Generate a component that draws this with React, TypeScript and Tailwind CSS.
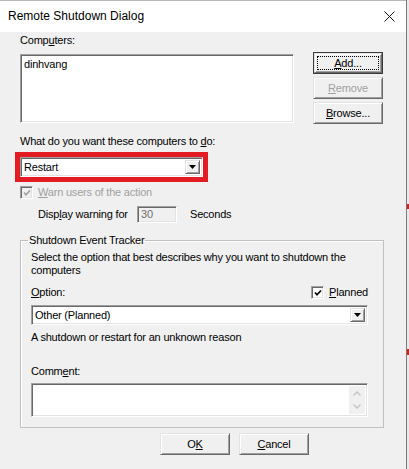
import type { ReactNode } from 'react'

const sunken =
  'border border-[#a0a0a0] border-r-white border-b-white shadow-[inset_1px_1px_0_#696969,inset_-1px_-1px_0_#e3e3e3]'
const raised =
  'border border-[#e3e3e3] border-r-[#696969] border-b-[#696969] bg-[#f0f0f0] shadow-[inset_1px_1px_0_#fff,inset_-1px_-1px_0_#a0a0a0]'

function U({ children }: { children: ReactNode }) {
  return <span className="underline decoration-1 underline-offset-[1px]">{children}</span>
}

function Btn({ children, disabled }: { children: ReactNode; disabled?: boolean }) {
  return (
    <div className={`flex h-[22px] w-[70px] items-center justify-center ${raised} ${disabled ? 'text-[#a0a0a0]' : 'text-black'}`}>
      {children}
    </div>
  )
}

function DefaultBtn({ children }: { children: ReactNode }) {
  return (
    <div className="h-[22px] w-[70px] border border-[#3c3c3c]">
      <div className={`flex h-full w-full p-[2px] ${raised}`}>
        <div className="flex flex-1 items-center justify-center border border-dotted border-black">{children}</div>
      </div>
    </div>
  )
}

function Combo({ value, width }: { value: string; width: string }) {
  return (
    <div className={`flex h-[20px] ${width} items-stretch bg-white p-[2px] ${sunken}`}>
      <span className="flex flex-1 items-center pl-[1px]">{value}</span>
      <div className={`flex w-[15px] items-center justify-center ${raised}`}>
        <svg width="7" height="4" viewBox="0 0 7 4">
          <path d="M0 0h7L3.5 4z" fill="#000" />
        </svg>
      </div>
    </div>
  )
}

function Check({ disabled }: { disabled?: boolean }) {
  return (
    <div className={`flex h-[13px] w-[13px] shrink-0 items-center justify-center ${sunken} ${disabled ? 'bg-[#f0f0f0]' : 'bg-white'}`}>
      <svg width="8" height="8" viewBox="0 0 8 8">
        <path d="M1 3.5 L3 5.8 L7 1.5" fill="none" stroke={disabled ? '#a0a0a0' : '#000'} strokeWidth="1.7" />
      </svg>
    </div>
  )
}

export default function App() {
  return (
    <div className="flex h-[469px] w-[409px] bg-[#f0f0f0] font-['Liberation_Sans',Arial,sans-serif] text-[11px] leading-[13px] tracking-[-0.2px] text-black">
      <div className="flex w-[406px] flex-col border-t border-[#b9b9b9]">
        <div className="flex h-[31px] items-center justify-between bg-white pl-[8px] pr-[11px]">
          <span className="text-[12px] tracking-normal">Remote Shutdown Dialog</span>
          <svg width="11" height="11" viewBox="0 0 11 11">
            <path d="M0.5 0.5L10.5 10.5M10.5 0.5L0.5 10.5" stroke="#111" strokeWidth="1" />
          </svg>
        </div>

        <div className="flex flex-1 flex-col pl-[20px]">
          <div className="flex items-start">
            <div className="flex flex-col">
              <span className="mt-[2px] h-[13px]">
                Comp<U>u</U>ters:
              </span>
              <div className={`mt-[7px] h-[69px] w-[274px] bg-white pl-[3px] pt-[3px] ${sunken}`}>dinhvang</div>
            </div>
            <div className="ml-[19px] mt-[20px] flex flex-col gap-[3px]">
              <DefaultBtn>
                <U>A</U>dd...
              </DefaultBtn>
              <Btn disabled>
                <U>R</U>emove
              </Btn>
              <Btn>
                <U>B</U>rowse...
              </Btn>
            </div>
          </div>

          <span className="mt-[11px] h-[13px]">
            What do you want these computers to <U>d</U>o:
          </span>

          <div className="-ml-[5px] mt-[4px] w-fit border-[5px] border-[#e31b23]">
            <Combo value="Restart" width="w-[183px]" />
          </div>

          <div className="mt-[4px] flex h-[13px] items-center gap-[5px]">
            <Check disabled />
            <span className="text-[#a0a0a0]">
              <U>W</U>arn users of the action
            </span>
          </div>

          <div className="ml-[18px] mt-[7px] flex h-[17px] items-center">
            <span className="w-[99px]">
              Disp<U>l</U>ay warning for
            </span>
            <div className={`flex h-[17px] w-[40px] items-center bg-[#f0f0f0] pl-[3px] text-[#6d6d6d] ${sunken}`}>30</div>
            <span className="ml-[13px]">Seconds</span>
          </div>

          <fieldset className="mt-[11px] w-[364px] border border-[#c0c0c0] pb-[10px] pl-[10px] pr-[15px] shadow-[inset_1px_1px_0_#fff]">
            <legend className="-ml-[3px] px-[1px]">Shutdown Event Tracker</legend>
            <p className="mt-[4px]">
              Select the option that best describes why you want to shutdown the
              <br />
              computers
            </p>
            <div className="mt-[9px] flex h-[13px] items-center justify-between">
              <span>
                <U>O</U>ption:
              </span>
              <div className="flex items-center gap-[5px]">
                <Check />
                <span>
                  <U>P</U>lanned
                </span>
              </div>
            </div>
            <div className="mt-[6px]">
              <Combo value="Other (Planned)" width="w-[337px]" />
            </div>
            <p className="mt-[6px] h-[13px]">A shutdown or restart for an unknown reason</p>
            <p className="mt-[21px] h-[13px]">
              Comm<U>e</U>nt:
            </p>
            <div className={`mt-[5px] flex h-[34px] w-[337px] bg-white p-[2px] ${sunken}`}>
              <div className="flex-1" />
              <div className="flex w-[16px] flex-col items-center justify-between bg-[#f0f0f0] py-[5px]">
                <svg width="8" height="5" viewBox="0 0 8 5">
                  <path d="M0.5 4.5L4 1L7.5 4.5" fill="none" stroke="#c4c4c4" strokeWidth="1.3" />
                </svg>
                <svg width="8" height="5" viewBox="0 0 8 5">
                  <path d="M0.5 0.5L4 4L7.5 0.5" fill="none" stroke="#c4c4c4" strokeWidth="1.3" />
                </svg>
              </div>
            </div>
          </fieldset>

          <div className="ml-[140px] mt-[5px] flex gap-[9px]">
            <Btn>
              O<U>K</U>
            </Btn>
            <Btn>
              <U>C</U>ancel
            </Btn>
          </div>
        </div>
      </div>
      <div className="w-[1px] bg-[#7a7a7a]" />
      <div className="flex w-[2px] flex-col bg-[#e9e9e9]">
        <div className="h-[204px]" />
        <div className="h-[5px] bg-[#d02020]" />
        <div className="h-[140px]" />
        <div className="h-[6px] bg-[#d02020]" />
      </div>
    </div>
  )
}
